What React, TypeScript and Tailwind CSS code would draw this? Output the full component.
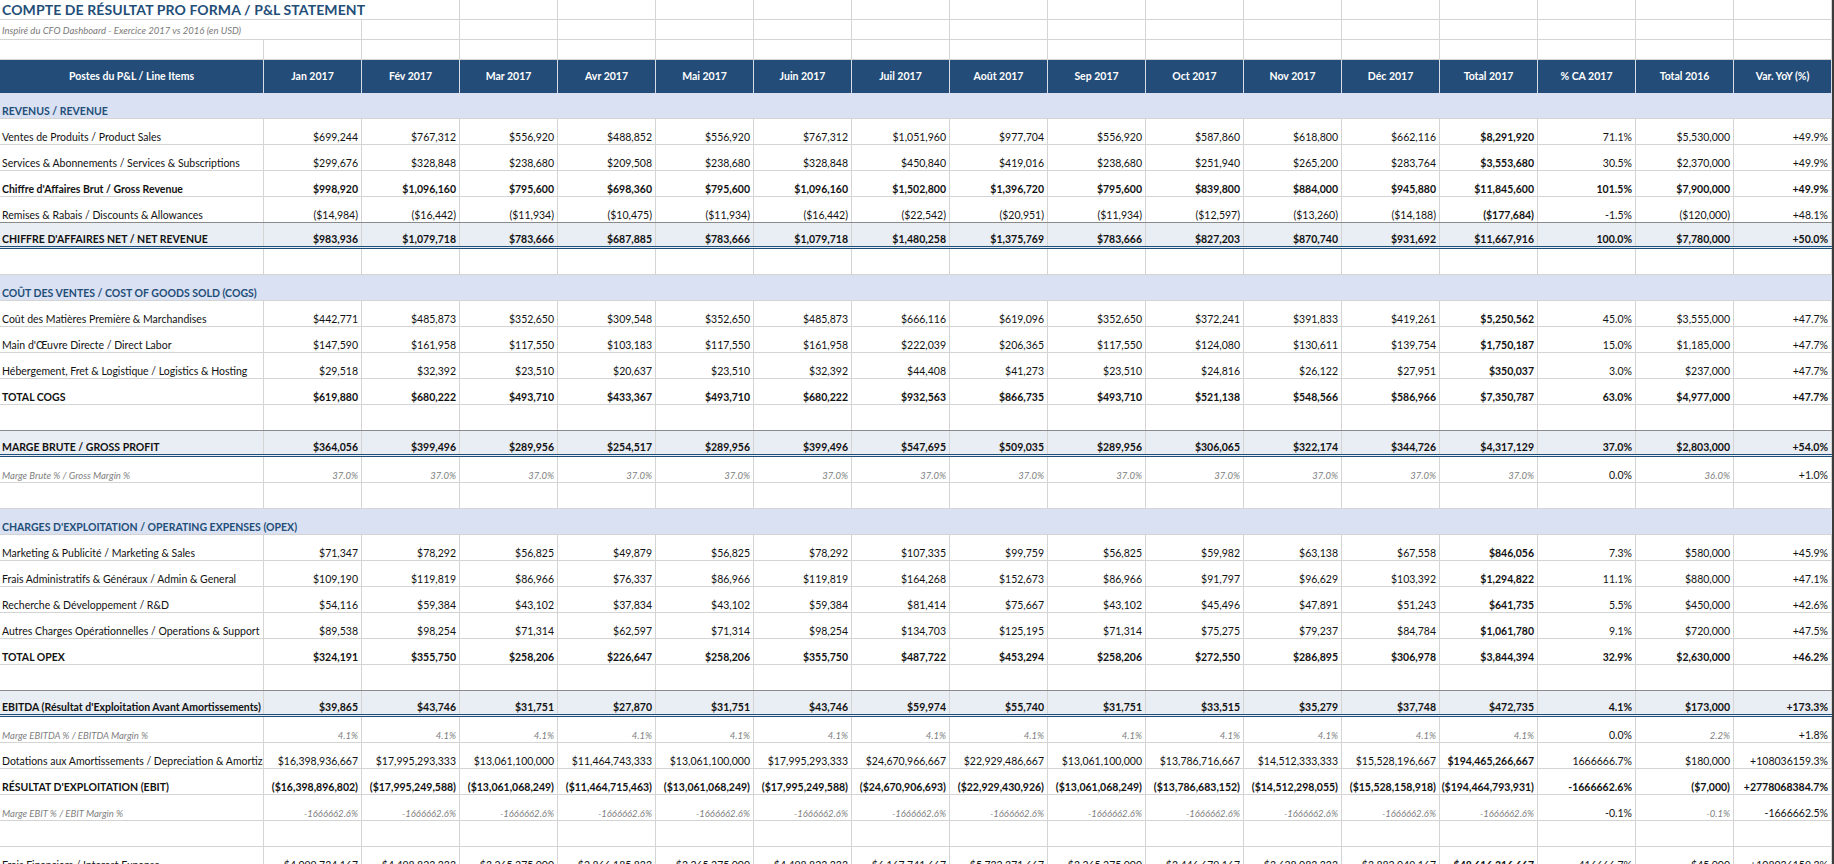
import React from "react";

type Kind = "item" | "bold" | "total" | "pct" | "empty" | "section";

interface Row {
  kind: Kind;
  label?: string;
  vals?: string[];
  darkBottom?: boolean;
}

const v = (s: string) => s.trim().split(/\s+/);

const MONTHS = [
  "Jan 2017",
  "Fév 2017",
  "Mar 2017",
  "Avr 2017",
  "Mai 2017",
  "Juin 2017",
  "Juil 2017",
  "Août 2017",
  "Sep 2017",
  "Oct 2017",
  "Nov 2017",
  "Déc 2017",
  "Total 2017",
  "% CA 2017",
  "Total 2016",
  "Var. YoY (%)",
];

const ROWS: Row[] = [
  { kind: "section", label: "REVENUS / REVENUE" },
  {
    kind: "item",
    label: "Ventes de Produits / Product Sales",
    vals: v("$699,244 $767,312 $556,920 $488,852 $556,920 $767,312 $1,051,960 $977,704 $556,920 $587,860 $618,800 $662,116 $8,291,920 71.1% $5,530,000 +49.9%"),
  },
  {
    kind: "item",
    label: "Services & Abonnements / Services & Subscriptions",
    vals: v("$299,676 $328,848 $238,680 $209,508 $238,680 $328,848 $450,840 $419,016 $238,680 $251,940 $265,200 $283,764 $3,553,680 30.5% $2,370,000 +49.9%"),
  },
  {
    kind: "bold",
    label: "Chiffre d'Affaires Brut / Gross Revenue",
    vals: v("$998,920 $1,096,160 $795,600 $698,360 $795,600 $1,096,160 $1,502,800 $1,396,720 $795,600 $839,800 $884,000 $945,880 $11,845,600 101.5% $7,900,000 +49.9%"),
  },
  {
    kind: "item",
    label: "Remises & Rabais / Discounts & Allowances",
    vals: v("($14,984) ($16,442) ($11,934) ($10,475) ($11,934) ($16,442) ($22,542) ($20,951) ($11,934) ($12,597) ($13,260) ($14,188) ($177,684) -1.5% ($120,000) +48.1%"),
    darkBottom: true,
  },
  {
    kind: "total",
    label: "CHIFFRE D'AFFAIRES NET / NET REVENUE",
    vals: v("$983,936 $1,079,718 $783,666 $687,885 $783,666 $1,079,718 $1,480,258 $1,375,769 $783,666 $827,203 $870,740 $931,692 $11,667,916 100.0% $7,780,000 +50.0%"),
  },
  { kind: "empty" },
  { kind: "section", label: "COÛT DES VENTES / COST OF GOODS SOLD (COGS)" },
  {
    kind: "item",
    label: "Coût des Matières Première & Marchandises",
    vals: v("$442,771 $485,873 $352,650 $309,548 $352,650 $485,873 $666,116 $619,096 $352,650 $372,241 $391,833 $419,261 $5,250,562 45.0% $3,555,000 +47.7%"),
  },
  {
    kind: "item",
    label: "Main d'Œuvre Directe / Direct Labor",
    vals: v("$147,590 $161,958 $117,550 $103,183 $117,550 $161,958 $222,039 $206,365 $117,550 $124,080 $130,611 $139,754 $1,750,187 15.0% $1,185,000 +47.7%"),
  },
  {
    kind: "item",
    label: "Hébergement, Fret & Logistique / Logistics & Hosting",
    vals: v("$29,518 $32,392 $23,510 $20,637 $23,510 $32,392 $44,408 $41,273 $23,510 $24,816 $26,122 $27,951 $350,037 3.0% $237,000 +47.7%"),
  },
  {
    kind: "bold",
    label: "TOTAL COGS",
    vals: v("$619,880 $680,222 $493,710 $433,367 $493,710 $680,222 $932,563 $866,735 $493,710 $521,138 $548,566 $586,966 $7,350,787 63.0% $4,977,000 +47.7%"),
  },
  { kind: "empty", darkBottom: true },
  {
    kind: "total",
    label: "MARGE BRUTE / GROSS PROFIT",
    vals: v("$364,056 $399,496 $289,956 $254,517 $289,956 $399,496 $547,695 $509,035 $289,956 $306,065 $322,174 $344,726 $4,317,129 37.0% $2,803,000 +54.0%"),
  },
  {
    kind: "pct",
    label: "Marge Brute % / Gross Margin %",
    vals: v("37.0% 37.0% 37.0% 37.0% 37.0% 37.0% 37.0% 37.0% 37.0% 37.0% 37.0% 37.0% 37.0% 0.0% 36.0% +1.0%"),
  },
  { kind: "empty" },
  { kind: "section", label: "CHARGES D'EXPLOITATION / OPERATING EXPENSES (OPEX)" },
  {
    kind: "item",
    label: "Marketing & Publicité / Marketing & Sales",
    vals: v("$71,347 $78,292 $56,825 $49,879 $56,825 $78,292 $107,335 $99,759 $56,825 $59,982 $63,138 $67,558 $846,056 7.3% $580,000 +45.9%"),
  },
  {
    kind: "item",
    label: "Frais Administratifs & Généraux / Admin & General",
    vals: v("$109,190 $119,819 $86,966 $76,337 $86,966 $119,819 $164,268 $152,673 $86,966 $91,797 $96,629 $103,392 $1,294,822 11.1% $880,000 +47.1%"),
  },
  {
    kind: "item",
    label: "Recherche & Développement / R&D",
    vals: v("$54,116 $59,384 $43,102 $37,834 $43,102 $59,384 $81,414 $75,667 $43,102 $45,496 $47,891 $51,243 $641,735 5.5% $450,000 +42.6%"),
  },
  {
    kind: "item",
    label: "Autres Charges Opérationnelles / Operations & Support",
    vals: v("$89,538 $98,254 $71,314 $62,597 $71,314 $98,254 $134,703 $125,195 $71,314 $75,275 $79,237 $84,784 $1,061,780 9.1% $720,000 +47.5%"),
  },
  {
    kind: "bold",
    label: "TOTAL OPEX",
    vals: v("$324,191 $355,750 $258,206 $226,647 $258,206 $355,750 $487,722 $453,294 $258,206 $272,550 $286,895 $306,978 $3,844,394 32.9% $2,630,000 +46.2%"),
  },
  { kind: "empty", darkBottom: true },
  {
    kind: "total",
    label: "EBITDA (Résultat d'Exploitation Avant Amortissements)",
    vals: v("$39,865 $43,746 $31,751 $27,870 $31,751 $43,746 $59,974 $55,740 $31,751 $33,515 $35,279 $37,748 $472,735 4.1% $173,000 +173.3%"),
  },
  {
    kind: "pct",
    label: "Marge EBITDA % / EBITDA Margin %",
    vals: v("4.1% 4.1% 4.1% 4.1% 4.1% 4.1% 4.1% 4.1% 4.1% 4.1% 4.1% 4.1% 4.1% 0.0% 2.2% +1.8%"),
  },
  {
    kind: "item",
    label: "Dotations aux Amortissements / Depreciation & Amortization",
    vals: v("$16,398,936,667 $17,995,293,333 $13,061,100,000 $11,464,743,333 $13,061,100,000 $17,995,293,333 $24,670,966,667 $22,929,486,667 $13,061,100,000 $13,786,716,667 $14,512,333,333 $15,528,196,667 $194,465,266,667 1666666.7% $180,000 +108036159.3%"),
  },
  {
    kind: "bold",
    label: "RÉSULTAT D'EXPLOITATION (EBIT)",
    vals: v("($16,398,896,802) ($17,995,249,588) ($13,061,068,249) ($11,464,715,463) ($13,061,068,249) ($17,995,249,588) ($24,670,906,693) ($22,929,430,926) ($13,061,068,249) ($13,786,683,152) ($14,512,298,055) ($15,528,158,918) ($194,464,793,931) -1666662.6% ($7,000) +2778068384.7%"),
  },
  {
    kind: "pct",
    label: "Marge EBIT % / EBIT Margin %",
    vals: v("-1666662.6% -1666662.6% -1666662.6% -1666662.6% -1666662.6% -1666662.6% -1666662.6% -1666662.6% -1666662.6% -1666662.6% -1666662.6% -1666662.6% -1666662.6% -0.1% -0.1% -1666662.5%"),
  },
  { kind: "empty" },
  {
    kind: "item",
    label: "Frais Financiers / Interest Expense",
    vals: v("$4,099,734,167 $4,498,823,333 $3,265,275,000 $2,866,185,833 $3,265,275,000 $4,498,823,333 $6,167,741,667 $5,732,371,667 $3,265,275,000 $3,446,679,167 $3,628,083,333 $3,882,049,167 $48,616,316,667 416666.7% $45,000 +108036159.3%"),
  },
];

const GRID = "grid grid-cols-[264px_repeat(16,98px)]";

function valueClass(kind: Kind, i: number): string {
  if (kind === "bold" || kind === "total") return "font-bold text-[10.5px] text-[#111]";
  if (kind === "pct") {
    if (i === 13 || i === 15) return "text-[10.5px] text-[#111]";
    return "italic text-[9.5px] text-[#808080]";
  }
  if (i === 12) return "font-bold text-[10.5px] text-[#111]";
  return "text-[10.5px] text-[#111]";
}

function DataRow({ row }: { row: Row }) {
  if (row.kind === "section") {
    return (
      <div className="h-[26px] shrink-0 bg-[#d9e1f2] border-b border-[#d4d4d4] flex items-end pl-[2px] pb-[1px]">
        <span className="font-bold text-[10.5px] leading-none text-[#1f4e79] whitespace-nowrap">{row.label}</span>
      </div>
    );
  }
  let rowCls = "h-[26px] border-b border-[#d4d4d4]";
  if (row.darkBottom) rowCls = "h-[26px] border-b border-[#8a8a8a]";
  if (row.kind === "total") rowCls = "h-[26px] bg-[#e9edf4] border-b-[3px] border-double border-[#1f4e79]";

  const labelCls =
    row.kind === "bold" || row.kind === "total"
      ? "font-bold text-[10.5px] text-[#111]"
      : row.kind === "pct"
      ? "italic text-[9.5px] text-[#808080]"
      : "text-[10.5px] text-[#111]";

  const cells = row.vals ?? Array.from({ length: 16 }, () => "");
  return (
    <div className={`${GRID} shrink-0 ${rowCls}`}>
      <div className="border-r border-[#d4d4d4] flex items-end overflow-hidden pl-[2px] pb-[1px]">
        <span className={`${labelCls} leading-none whitespace-nowrap`}>{row.label ?? ""}</span>
      </div>
      {cells.map((c, i) => (
        <div key={i} className="border-r border-[#d4d4d4] flex items-end justify-end overflow-hidden pr-[3px] pb-[1px]">
          <span className={`${valueClass(row.kind, i)} leading-none whitespace-nowrap`}>{c}</span>
        </div>
      ))}
    </div>
  );
}

export default function App() {
  const blanks14 = Array.from({ length: 14 }, (_, i) => i);
  const blanks15 = Array.from({ length: 15 }, (_, i) => i);
  const blanks16 = Array.from({ length: 16 }, (_, i) => i);
  return (
    <div className="w-[1834px] h-[864px] overflow-hidden bg-white flex items-start font-['Lato',sans-serif]">
      <div className="w-[1832px] shrink-0 flex flex-col">
        {/* Title row */}
        <div className="grid grid-cols-[460px_repeat(14,98px)] h-[19.5px] shrink-0 border-b border-[#d4d4d4]">
          <div className="border-r border-[#d4d4d4] flex items-end pl-[2px] pb-[2px]">
            <span className="font-bold text-[14px] leading-none text-[#1f4e79] whitespace-nowrap tracking-[0.1px]">
              COMPTE DE RÉSULTAT PRO FORMA / P&amp;L STATEMENT
            </span>
          </div>
          {blanks14.map((i) => (
            <div key={i} className="border-r border-[#d4d4d4]" />
          ))}
        </div>
        {/* Subtitle row */}
        <div className="grid grid-cols-[362px_repeat(15,98px)] h-[20px] shrink-0 border-b border-[#d4d4d4]">
          <div className="border-r border-[#d4d4d4] flex items-end pl-[2px] pb-[3px]">
            <span className="italic text-[9.5px] leading-none text-[#7a7a7a] whitespace-nowrap">
              Inspiré du CFO Dashboard - Exercice 2017 vs 2016 (en USD)
            </span>
          </div>
          {blanks15.map((i) => (
            <div key={i} className="border-r border-[#d4d4d4]" />
          ))}
        </div>
        {/* Blank row */}
        <div className={`${GRID} h-[20px] shrink-0 border-b border-[#d4d4d4]`}>
          <div className="border-r border-[#d4d4d4]" />
          {blanks16.map((i) => (
            <div key={i} className="border-r border-[#d4d4d4]" />
          ))}
        </div>
        {/* Header row */}
        <div className={`${GRID} h-[33.2px] shrink-0 bg-[#234c78]`}>
          <div className="border-r border-[#d6dde6] flex items-center justify-center">
            <span className="font-bold text-[10.5px] leading-none text-white whitespace-nowrap">
              Postes du P&amp;L / Line Items
            </span>
          </div>
          {MONTHS.map((m) => (
            <div key={m} className="border-r border-[#d6dde6] flex items-center justify-center">
              <span className="font-bold text-[10.5px] leading-none text-white whitespace-nowrap">{m}</span>
            </div>
          ))}
        </div>
        {ROWS.map((r, i) => (
          <DataRow key={i} row={r} />
        ))}
      </div>
      <div className="w-[2px] h-[864px] shrink-0 bg-[#3c3c3c]" />
    </div>
  );
}
